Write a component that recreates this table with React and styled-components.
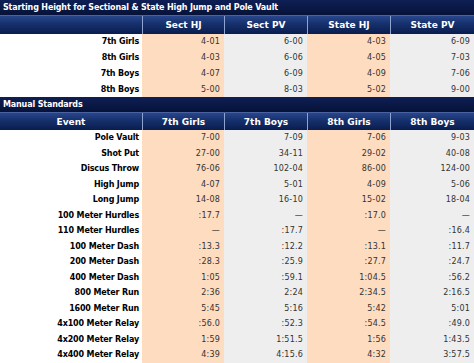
import React from "react";
import styled, { createGlobalStyle } from "styled-components";

const Global = createGlobalStyle`
  html, body { margin: 0; padding: 0; background: #ffffff; }
  body { font-family: "DejaVu Sans", Verdana, sans-serif; }
`;

const Page = styled.div`
  width: 474px;
  display: flex;
  flex-direction: column;
`;

const cols = "142px 82px 83px 83px 84px";

const SectionTitle = styled.div`
  height: 15px;
  line-height: 15px;
  padding-left: 3px;
  background: linear-gradient(#0e1f55, #061238);
  color: #ffffff;
  font-weight: bold;
  font-size: 8px;
  letter-spacing: -0.15px;
  white-space: nowrap;
`;

const HeaderRow = styled.div`
  display: grid;
  grid-template-columns: ${cols};
  height: ${(p) => p.$h}px;
  background: linear-gradient(#28468c 0%, #17326e 40%, #0a1c4e 100%);
  border-top: 1px solid #4a62a0;
  box-sizing: border-box;
`;

const HeaderCell = styled.div`
  display: flex;
  align-items: center;
  justify-content: center;
  color: #ffffff;
  font-weight: bold;
  font-size: 9px;
  border-left: ${(p) => (p.$first ? "none" : "1px solid #8ea3cf")};
`;

const Row = styled.div`
  display: grid;
  grid-template-columns: ${cols};
  height: ${(p) => p.$h}px;
  box-sizing: border-box;
  border-bottom: 1px solid rgba(0, 0, 0, 0.1);
`;

const bgFor = { label: "#ffffff", orange: "#fddcc0", gray: "#eeeeee" };

const Cell = styled.div`
  display: flex;
  align-items: center;
  justify-content: flex-end;
  padding-right: ${(p) => (p.$kind === "label" ? 3 : 4)}px;
  background: ${(p) => bgFor[p.$kind]};
  color: ${(p) => (p.$kind === "label" ? "#000000" : "#333333")};
  font-weight: ${(p) => (p.$kind === "label" ? "bold" : "normal")};
  font-size: 8px;
  letter-spacing: ${(p) => (p.$kind === "label" ? "-0.15px" : "0.2px")};
  white-space: nowrap;
  margin-bottom: -1px;
`;

const kinds = ["orange", "gray", "orange", "gray"];

const heightRows = [
  ["7th Girls", "4-01", "6-00", "4-03", "6-09"],
  ["8th Girls", "4-03", "6-06", "4-05", "7-03"],
  ["7th Boys", "4-07", "6-09", "4-09", "7-06"],
  ["8th Boys", "5-00", "8-03", "5-02", "9-00"],
];

const manualRows = [
  ["Pole Vault", "7-00", "7-09", "7-06", "9-03"],
  ["Shot Put", "27-00", "34-11", "29-02", "40-08"],
  ["Discus Throw", "76-06", "102-04", "86-00", "124-00"],
  ["High Jump", "4-07", "5-01", "4-09", "5-06"],
  ["Long Jump", "14-08", "16-10", "15-02", "18-04"],
  ["100 Meter Hurdles", ":17.7", "—", ":17.0", "—"],
  ["110 Meter Hurdles", "—", ":17.7", "—", ":16.4"],
  ["100 Meter Dash", ":13.3", ":12.2", ":13.1", ":11.7"],
  ["200 Meter Dash", ":28.3", ":25.9", ":27.7", ":24.7"],
  ["400 Meter Dash", "1:05", ":59.1", "1:04.5", ":56.2"],
  ["800 Meter Run", "2:36", "2:24", "2:34.5", "2:16.5"],
  ["1600 Meter Run", "5:45", "5:16", "5:42", "5:01"],
  ["4x100 Meter Relay", ":56.0", ":52.3", ":54.5", ":49.0"],
  ["4x200 Meter Relay", "1:59", "1:51.5", "1:56", "1:43.5"],
  ["4x400 Meter Relay", "4:39", "4:15.6", "4:32", "3:57.5"],
];

function DataRow({ row, h }) {
  return (
    <Row $h={h}>
      <Cell $kind="label">{row[0]}</Cell>
      {row.slice(1).map((v, i) => (
        <Cell key={i} $kind={kinds[i]}>
          {v}
        </Cell>
      ))}
    </Row>
  );
}

export default function App() {
  return (
    <Page>
      <Global />
      <SectionTitle>Starting Height for Sectional &amp; State High Jump and Pole Vault</SectionTitle>
      <HeaderRow $h={19}>
        <HeaderCell $first />
        <HeaderCell>Sect HJ</HeaderCell>
        <HeaderCell>Sect PV</HeaderCell>
        <HeaderCell>State HJ</HeaderCell>
        <HeaderCell>State PV</HeaderCell>
      </HeaderRow>
      {heightRows.map((r) => (
        <DataRow key={r[0]} row={r} h={15.75} />
      ))}
      <SectionTitle>Manual Standards</SectionTitle>
      <HeaderRow $h={18}>
        <HeaderCell $first>Event</HeaderCell>
        <HeaderCell>7th Girls</HeaderCell>
        <HeaderCell>7th Boys</HeaderCell>
        <HeaderCell>8th Girls</HeaderCell>
        <HeaderCell>8th Boys</HeaderCell>
      </HeaderRow>
      {manualRows.map((r) => (
        <DataRow key={r[0]} row={r} h={15.5} />
      ))}
    </Page>
  );
}
